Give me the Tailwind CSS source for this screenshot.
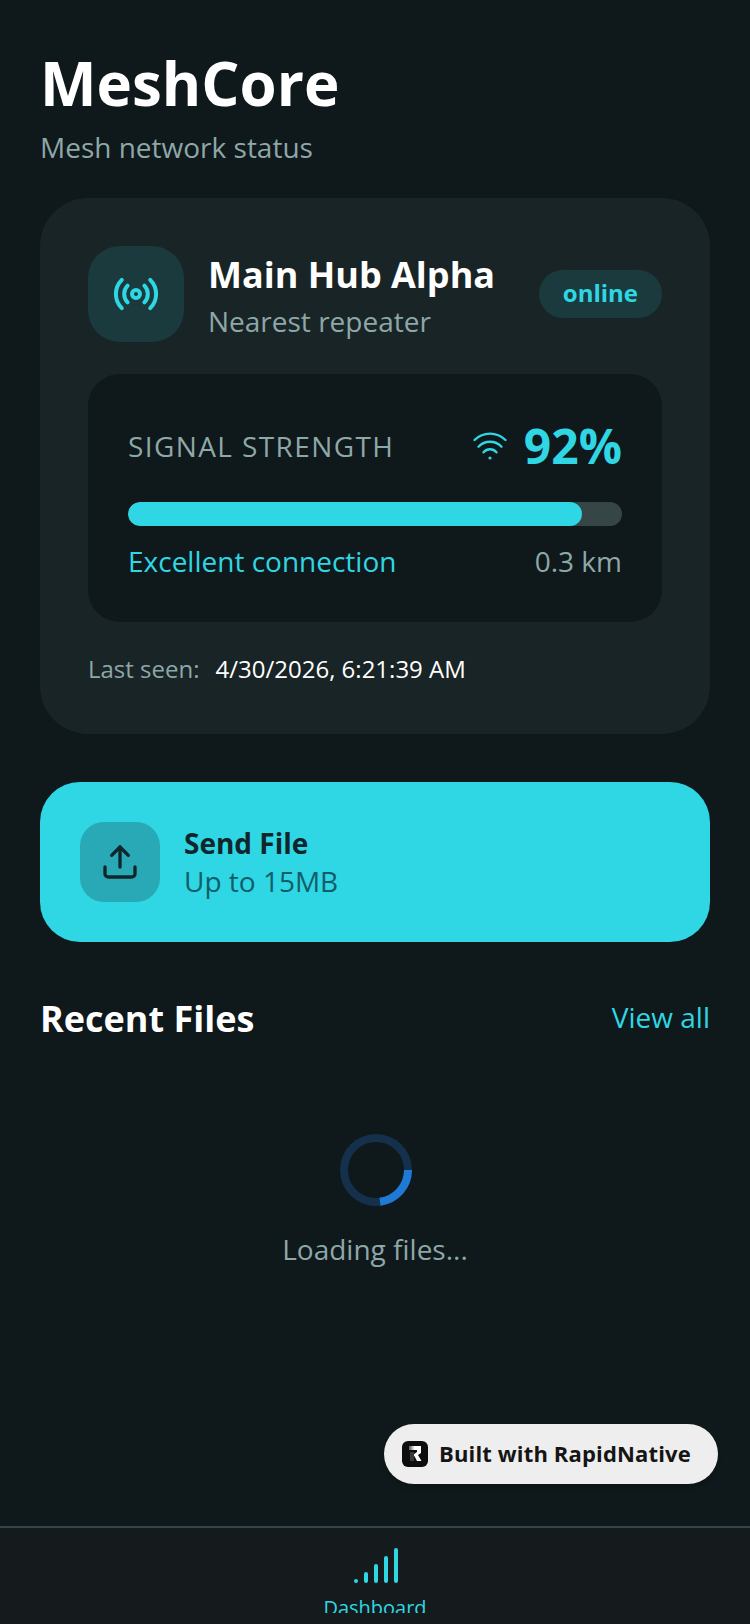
<!DOCTYPE html>
<html lang="en">
<head>
    <meta charset="UTF-8">
    <meta name="viewport" content="width=device-width, initial-scale=1.0">
    <script src="https://cdn.jsdelivr.net/npm/@tailwindcss/browser@4"></script>
    <title>MeshCore</title>
</head>
<body class="bg-[#0f181a]">
<div class="relative w-[750px] h-[1624px] overflow-hidden flex flex-col font-['Open_Sans',sans-serif] bg-[#0f181a]">

  <main class="flex-1 px-10 pt-[39px]">
    <h1 class="text-[60px] leading-[88px] font-bold text-white">MeshCore</h1>
    <p class="text-[28px] leading-[40px] text-[#8ea7a8]">Mesh network status</p>

    <!-- repeater card -->
    <section class="mt-[31px] h-[536px] rounded-[48px] bg-[#192426] p-12">
      <div class="flex items-center gap-6 h-24">
        <div class="w-24 h-24 shrink-0 rounded-[32px] bg-[#1b3a3e] flex items-center justify-center">
          <svg width="48" height="48" viewBox="0 0 24 24" fill="none" stroke="#2fd6e3" stroke-width="2" stroke-linecap="round">
            <circle cx="12" cy="12" r="2"/>
            <path d="M16.2 7.8a6 6 0 0 1 0 8.4"/>
            <path d="M7.8 16.2a6 6 0 0 1 0-8.4"/>
            <path d="M19.1 4.9a10 10 0 0 1 0 14.2"/>
            <path d="M4.9 19.1a10 10 0 0 1 0-14.2"/>
          </svg>
        </div>
        <div class="flex-1 pt-1">
          <h2 class="text-[36px] leading-[48px] font-bold text-white">Main Hub Alpha</h2>
          <p class="mt-[2px] text-[28px] leading-[40px] text-[#8ea7a8]">Nearest repeater</p>
        </div>
        <span class="h-12 px-6 pb-[2px] rounded-full bg-[#1b3a3e] flex items-center text-[24px] font-bold text-[#2fd6e3]">online</span>
      </div>

      <div class="mt-8 h-[248px] rounded-[32px] bg-[#0f181a] p-10">
        <div class="flex items-center justify-between h-[64px]">
          <span class="text-[28px] tracking-[1.4px] text-[#8ea7a8]">SIGNAL STRENGTH</span>
          <div class="flex items-center gap-[17px]">
            <svg width="34" height="28" viewBox="0 0 34 28" fill="none" stroke="#2fd6e3" stroke-width="2.4" stroke-linecap="round">
              <path d="M1.5 8A22 22 0 0 1 32.5 8"/>
              <path d="M5.5 14.7A15.7 15.7 0 0 1 28.5 14.7"/>
              <path d="M10.5 20.3A8.5 8.5 0 0 1 23.5 20.3"/>
              <circle cx="17" cy="26" r="1.6" fill="#2fd6e3" stroke="none"/>
            </svg>
            <span class="text-[48px] leading-[64px] font-bold text-[#2fd6e3]">92%</span>
          </div>
        </div>
        <div class="mt-6 h-6 rounded-full bg-[#364646] overflow-hidden">
          <div class="h-full rounded-full bg-[#2fd6e3]" style="width: 92%"></div>
        </div>
        <div class="mt-[15px] flex items-center justify-between">
          <span class="text-[28px] leading-[40px] text-[#2fd6e3]">Excellent connection</span>
          <span class="text-[28px] leading-[40px] text-[#8ea7a8]">0.3 km</span>
        </div>
      </div>

      <div class="mt-[29px] flex items-center gap-4 text-[24px] leading-[36px]">
        <span class="text-[#8ea7a8]">Last seen:</span>
        <span class="text-white">4/30/2026, 6:21:39 AM</span>
      </div>
    </section>

    <!-- send file -->
    <button class="mt-12 w-full h-40 rounded-[40px] bg-[#2fd6e3] px-10 flex items-center gap-6 text-left">
      <div class="w-20 h-20 rounded-[24px] bg-[#29a8b6] flex items-center justify-center">
        <svg width="40" height="40" viewBox="0 0 24 24" fill="none" stroke="#10262c" stroke-width="2" stroke-linecap="round" stroke-linejoin="round">
          <path d="M3 15v4a2 2 0 0 0 2 2h14a2 2 0 0 0 2-2v-4"/>
          <path d="M17 8l-5-5-5 5"/>
          <path d="M12 3v12"/>
        </svg>
      </div>
      <div>
        <div class="text-[28px] leading-[38px] font-bold text-[#10262c]">Send File</div>
        <div class="text-[28px] leading-[38px] text-[#125d69]">Up to 15MB</div>
      </div>
    </button>

    <div class="mt-12 h-14 flex items-center justify-between">
      <h2 class="pt-[2px] text-[36px] leading-[56px] font-bold text-white">Recent Files</h2>
      <span class="pb-[2px] text-[28px] text-[#2fd6e3]">View all</span>
    </div>

    <!-- loading -->
    <div class="mt-[88px] flex flex-col items-center">
      <svg class="ml-[2px]" width="72" height="72" viewBox="0 0 72 72" fill="none">
        <circle cx="36" cy="36" r="32" stroke="#14304a" stroke-width="8"/>
        <path d="M68 36A32 32 0 0 1 40 67.7" stroke="#1f7ad6" stroke-width="8"/>
      </svg>
      <p class="mt-[23px] text-[28px] leading-[40px] text-[#8ea7a8]">Loading files...</p>
    </div>
  </main>

  <!-- badge -->
  <div class="absolute left-[384px] top-[1424px] w-[334px] h-[60px] rounded-full bg-[#eeeeee] flex items-center gap-[11px] pl-[18px] shadow-md">
    <svg width="26" height="26" viewBox="0 0 26 26">
      <defs>
        <linearGradient id="rfade" x1="0" y1="0" x2="1" y2="0">
          <stop offset="0" stop-color="#555555"/>
          <stop offset="0.45" stop-color="#ffffff"/>
        </linearGradient>
      </defs>
      <rect width="26" height="26" rx="6" fill="#0d0d0d"/>
      <path d="M7 5h12v7l-3 2 3.500 6h-4.500l-3.500-6.500 3.500-2.500v-2h-8z" fill="url(#rfade)"/>
      <path d="M8 11h4v9h-4z" fill="#3a3a3a"/>
    </svg>
    <span class="pb-[2px] text-[22px] font-bold tracking-[0.15px] text-[#151515]">Built with RapidNative</span>
  </div>

  <!-- tab bar -->
  <nav class="h-[98px] shrink-0 border-t-2 border-[#33454a] bg-[#151a1c] flex flex-col items-center pt-[20px]">
    <svg width="46" height="38" viewBox="0 0 46 38" fill="#2fd6e3">
      <rect x="2" y="31" width="4" height="4" rx="2"/>
      <rect x="12" y="24" width="4" height="11" rx="2"/>
      <rect x="22" y="16" width="4" height="19" rx="2"/>
      <rect x="32" y="8" width="4" height="27" rx="2"/>
      <rect x="42" y="0" width="4" height="35" rx="2"/>
    </svg>
    <div class="h-[27px] pt-[8px] overflow-hidden text-[20px] leading-[28px] text-[#2fd6e3]">Dashboard</div>
  </nav>
</div>
</body>
</html>
